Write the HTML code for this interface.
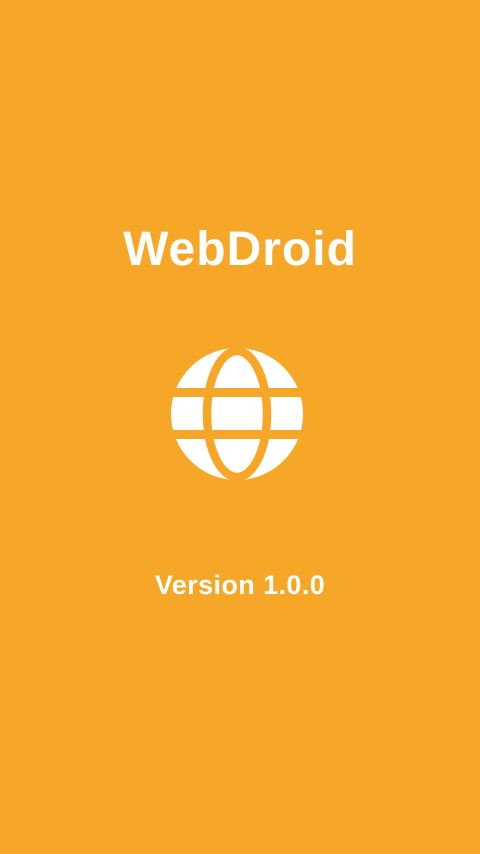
<!DOCTYPE html>
<html><head><meta charset="utf-8"><style>
html,body{margin:0;padding:0;}
body{width:480px;height:854px;background:#F7A728;position:relative;overflow:hidden;font-family:"Liberation Sans",sans-serif;color:#fff;}
.t{position:absolute;left:0;width:480px;text-align:center;font-weight:bold;}
#a{top:222px;font-size:48px;letter-spacing:1px;}
#b{top:570px;font-size:27px;letter-spacing:0.4px;}
svg{position:absolute;left:0;top:0;}
</style></head><body>
<div class="t" id="a">WebDroid</div>
<svg width="480" height="854">
<circle cx="237" cy="414" r="66" fill="#fff"/>
<ellipse cx="237" cy="414" rx="30" ry="63" fill="none" stroke="#F7A728" stroke-width="8.5"/>
<rect x="160" y="388" width="160" height="9" fill="#F7A728"/>
<rect x="160" y="430" width="160" height="9" fill="#F7A728"/>
</svg>
<div class="t" id="b">Version 1.0.0</div>
</body></html>
